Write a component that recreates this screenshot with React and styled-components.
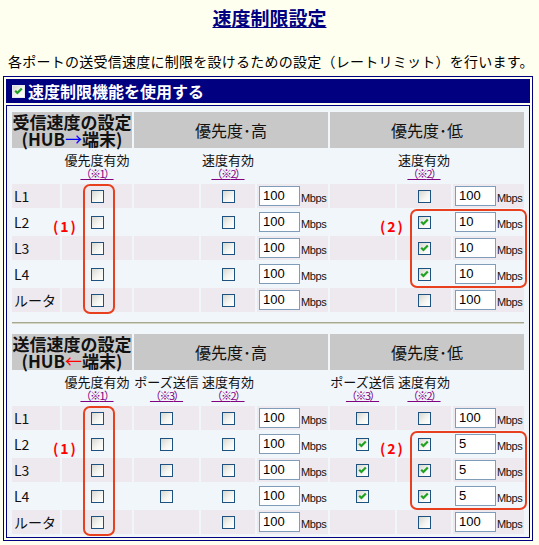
import React from 'react'
import styled, { createGlobalStyle } from 'styled-components'

const JP = '"Noto Sans CJK JP", "Liberation Sans", sans-serif'

const GlobalStyle = createGlobalStyle`
  body {
    margin: 0;
    background: #fffff0;
    font-family: ${JP};
    color: #000;
  }
`

const COLS = '48px 70px 65px 54px 71px 65px 54px 71px'

const RX_ROWS = [
  { label: 'L1', hiVal: '100', loOn: false, loVal: '100' },
  { label: 'L2', hiVal: '100', loOn: true, loVal: '10' },
  { label: 'L3', hiVal: '100', loOn: true, loVal: '10' },
  { label: 'L4', hiVal: '100', loOn: true, loVal: '10' },
  { label: 'ルータ', hiVal: '100', loOn: false, loVal: '100' },
]

const TX_ROWS = [
  { label: 'L1', hiPause: false, loPause: false, loOn: false, loVal: '100' },
  { label: 'L2', hiPause: false, loPause: true, loOn: true, loVal: '5' },
  { label: 'L3', hiPause: false, loPause: true, loOn: true, loVal: '5' },
  { label: 'L4', hiPause: false, loPause: true, loOn: true, loVal: '5' },
  { label: 'ルータ', hiPause: null, loPause: null, loOn: false, loVal: '100' },
]

const Page = styled.div`
  padding-top: 8px;
`

const Title = styled.h1`
  margin: 0;
  text-align: center;
  font-size: 19px;
  line-height: 20px;
  font-weight: bold;
  color: #000080;
  text-decoration: underline;
`

const Lead = styled.p`
  margin: 25px 0 0 8px;
  font-size: 14px;
  line-height: 16px;
  letter-spacing: 0.25px;
  white-space: nowrap;
`

const Panel = styled.div`
  margin: 7px 0 0 3px;
  width: 530px;
  box-sizing: border-box;
  border: 1px solid #000080;
  padding: 2px;
`

const PanelBar = styled.div`
  height: 24px;
  background: #000080;
  display: flex;
  align-items: center;
  padding-left: 6px;
  color: #fff;
  font-size: 16px;
  font-weight: bold;
  gap: 3px;
`

const PanelBody = styled.div`
  margin-top: 2px;
  border: 1px solid #000080;
  padding: 6px 3px 3px 5px;
  background: #f1f6fb;
`

const Section = styled.div`
  position: relative;
  display: grid;
  grid-template-columns: ${COLS};
  grid-template-rows: 36px 32px repeat(5, 24px);
  gap: 2px;
`

const Rule = styled.hr`
  margin: 10px 2px 10px 0;
  height: 0;
  border: 0;
  border-top: 1px solid #a8a890;
  border-bottom: 1px solid #d4d4c4;
`

const HeadCell = styled.div`
  grid-column: ${p => p.$span};
  background: #c8c8c8;
  display: flex;
  flex-direction: column;
  align-items: center;
  justify-content: center;
  font-size: ${p => (p.$strong ? '17px' : '16px')};
  font-weight: ${p => (p.$strong ? 'bold' : 'normal')};
  line-height: 18px;
  color: #111;
  white-space: nowrap;
`

const HeadLine = styled.div`
  display: block;
  height: 17px;
  line-height: 17px;
`

const Arrow = styled.span`
  color: ${p => p.$color};
  font-weight: normal;
`

const SubCell = styled.div`
  display: flex;
  flex-direction: column;
  align-items: center;
  justify-content: center;
  font-size: 13px;
  line-height: 14px;
  white-space: nowrap;
  color: #111;
`

const Note = styled.span`
  font-size: 11px;
  line-height: 13px;
  letter-spacing: -1.5px;
  color: #800080;
  text-decoration: underline;
`

const Cell = styled.div`
  background: ${p => (p.$shade ? '#eee9ee' : 'transparent')};
  display: flex;
  align-items: center;
  justify-content: ${p => (p.$left ? 'flex-start' : 'center')};
  padding-left: ${p => (p.$left ? '2px' : '0')};
  font-size: 14px;
  color: #111;
  white-space: nowrap;
`

const Box = styled.span`
  width: 13px;
  height: 13px;
  box-sizing: border-box;
  border: 1px solid ${p => (p.$light ? '#e8e8f0' : '#1c5180')};
  background: linear-gradient(135deg, #d8d8d2 0%, #f6f6f3 60%, #ffffff 100%);
  display: inline-flex;
  align-items: center;
  justify-content: center;
`

const Field = styled.span`
  width: 41px;
  height: 20px;
  box-sizing: border-box;
  border: 1px solid #7f9db9;
  background: #fff;
  font-family: "Liberation Sans", sans-serif;
  font-size: 13px;
  line-height: 18px;
  padding-left: 3px;
  color: #000;
`

const Unit = styled.span`
  margin: 4px 0 0 1px;
  font-family: "Liberation Sans", sans-serif;
  font-size: 11px;
  letter-spacing: -0.4px;
  color: #111;
`

const Frame = styled.div`
  position: absolute;
  left: ${p => p.$left}px;
  top: ${p => p.$top}px;
  width: ${p => p.$w}px;
  height: ${p => p.$h}px;
  box-sizing: border-box;
  border: 2px solid #e8401f;
  border-radius: 7px;
  pointer-events: none;
`

const Mark = styled.div`
  position: absolute;
  left: ${p => p.$left}px;
  top: 106px;
  font-size: 14px;
  font-weight: bold;
  line-height: 16px;
  letter-spacing: 2px;
  color: #ff0000;
`

const Check = ({ on, light }) => (
  <Box $light={light}>
    {on && (
      <svg width="9" height="8" viewBox="0 0 9 8">
        <polyline points="1.2,3.8 3.4,6 7.8,1.4" fill="none" stroke="#21a121" strokeWidth="2.2" />
      </svg>
    )}
  </Box>
)

const Speed = ({ value, shade }) => (
  <Cell $shade={shade} $left>
    <Field>{value}</Field>
    <Unit>Mbps</Unit>
  </Cell>
)

const Sub = ({ text, note }) => (
  <SubCell>
    {text}
    <Note>（※{note}）</Note>
  </SubCell>
)

const Header = ({ title, arrow, color }) => (
  <>
    <HeadCell $span="1 / 3" $strong>
      <HeadLine>{title}</HeadLine>
      <HeadLine>(HUB<Arrow $color={color}>{arrow}</Arrow>端末)</HeadLine>
    </HeadCell>
    <HeadCell $span="3 / 6">優先度･高</HeadCell>
    <HeadCell $span="6 / 9">優先度･低</HeadCell>
  </>
)

const Notes = () => (
  <>
    <Frame $left={71} $top={72} $w={32} $h={130} />
    <Mark $left={41}>(1)</Mark>
    <Frame $left={398} $top={97} $w={117} $h={79} />
    <Mark $left={368}>(2)</Mark>
  </>
)

const ReceiveSection = () => (
  <Section>
    <Header title="受信速度の設定" arrow="→" color="#0000ff" />
    <SubCell />
    <Sub text="優先度有効" note="1" />
    <SubCell />
    <Sub text="速度有効" note="2" />
    <SubCell />
    <SubCell />
    <Sub text="速度有効" note="2" />
    <SubCell />
    {RX_ROWS.map((r, i) => {
      const shade = i % 2 === 0
      return (
        <React.Fragment key={r.label}>
          <Cell $shade={shade} $left>{r.label}</Cell>
          <Cell $shade={shade}><Check /></Cell>
          <Cell $shade={shade} />
          <Cell $shade={shade}><Check /></Cell>
          <Speed value={r.hiVal} shade={shade} />
          <Cell $shade={shade} />
          <Cell $shade={shade}><Check on={r.loOn} /></Cell>
          <Speed value={r.loVal} shade={shade} />
        </React.Fragment>
      )
    })}
    <Notes />
  </Section>
)

const SendSection = () => (
  <Section>
    <Header title="送信速度の設定" arrow="←" color="#ff0000" />
    <SubCell />
    <Sub text="優先度有効" note="1" />
    <Sub text="ポーズ送信" note="3" />
    <Sub text="速度有効" note="2" />
    <SubCell />
    <Sub text="ポーズ送信" note="3" />
    <Sub text="速度有効" note="2" />
    <SubCell />
    {TX_ROWS.map((r, i) => {
      const shade = i % 2 === 0
      return (
        <React.Fragment key={r.label}>
          <Cell $shade={shade} $left>{r.label}</Cell>
          <Cell $shade={shade}><Check /></Cell>
          <Cell $shade={shade}>{r.hiPause !== null && <Check on={r.hiPause} />}</Cell>
          <Cell $shade={shade}><Check /></Cell>
          <Speed value="100" shade={shade} />
          <Cell $shade={shade}>{r.loPause !== null && <Check on={r.loPause} />}</Cell>
          <Cell $shade={shade}><Check on={r.loOn} /></Cell>
          <Speed value={r.loVal} shade={shade} />
        </React.Fragment>
      )
    })}
    <Notes />
  </Section>
)

export default function App() {
  return (
    <Page>
      <GlobalStyle />
      <Title>速度制限設定</Title>
      <Lead>各ポートの送受信速度に制限を設けるための設定（レートリミット）を行います。</Lead>
      <Panel>
        <PanelBar>
          <Check on light />
          <span>速度制限機能を使用する</span>
        </PanelBar>
        <PanelBody>
          <ReceiveSection />
          <Rule />
          <SendSection />
        </PanelBody>
      </Panel>
    </Page>
  )
}
